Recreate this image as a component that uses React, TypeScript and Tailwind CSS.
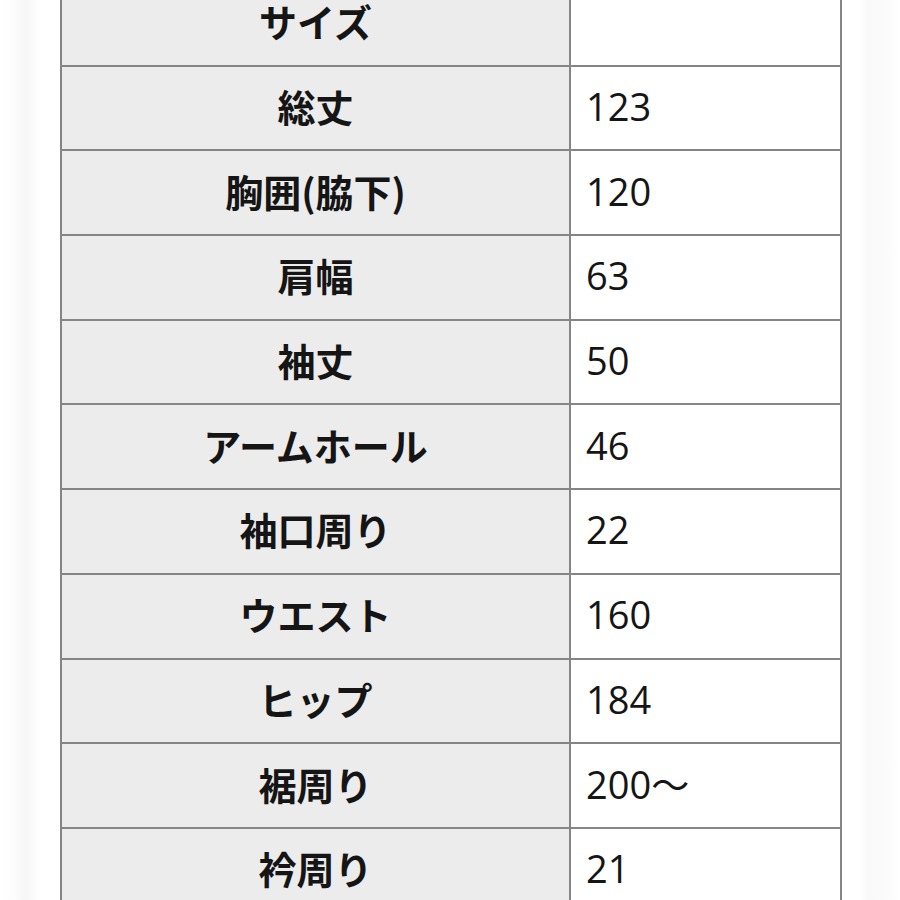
import React from "react";

const rows: [string, string][] = [
  ["サイズ", ""],
  ["総丈", "123"],
  ["胸囲(脇下)", "120"],
  ["肩幅", "63"],
  ["袖丈", "50"],
  ["アームホール", "46"],
  ["袖口周り", "22"],
  ["ウエスト", "160"],
  ["ヒップ", "184"],
  ["裾周り", "200〜"],
  ["衿周り", "21"],
];

export default function App() {
  return (
    <div className="w-[900px] h-[900px] overflow-hidden bg-white flex">
      <div className="w-[60px] shrink-0 bg-[linear-gradient(to_right,#ffffff_0px,#fcfcfc_16px,#f6f6f6_26px,#fcfcfc_36px,#ffffff_40px)]" />
      <div className="w-[782px] shrink-0 -mt-[20px]">
        <table className="w-[782px] border-collapse border-2 border-[#858585] table-fixed">
          <colgroup>
            <col className="w-[509px]" />
            <col />
          </colgroup>
          <tbody>
            {rows.map(([k, v], i) => (
              <tr key={i} className="h-[84.7px]">
                <td className="border-2 border-[#858585] bg-[#ececec] text-center font-bold text-[38px] leading-none text-[#151515] p-0 align-middle [font-family:'Noto_Sans_CJK_JP','Noto_Sans',sans-serif]">
                  <span className="relative -top-[2px]">{k}</span>
                </td>
                <td className="border-2 border-[#858585] bg-white text-left text-[38px] leading-none text-[#151515] pl-[15px] align-middle [font-family:'Open_Sans','Noto_Sans_CJK_JP',sans-serif]">
                  <span className="relative -top-[2px]">{v}</span>
                </td>
              </tr>
            ))}
          </tbody>
        </table>
      </div>
      <div className="flex-1 bg-[linear-gradient(to_right,#ffffff_0px,#ffffff_18px,#f9f9f9_26px,#fbfbfb_45px,#ffffff_58px)]" />
    </div>
  );
}
